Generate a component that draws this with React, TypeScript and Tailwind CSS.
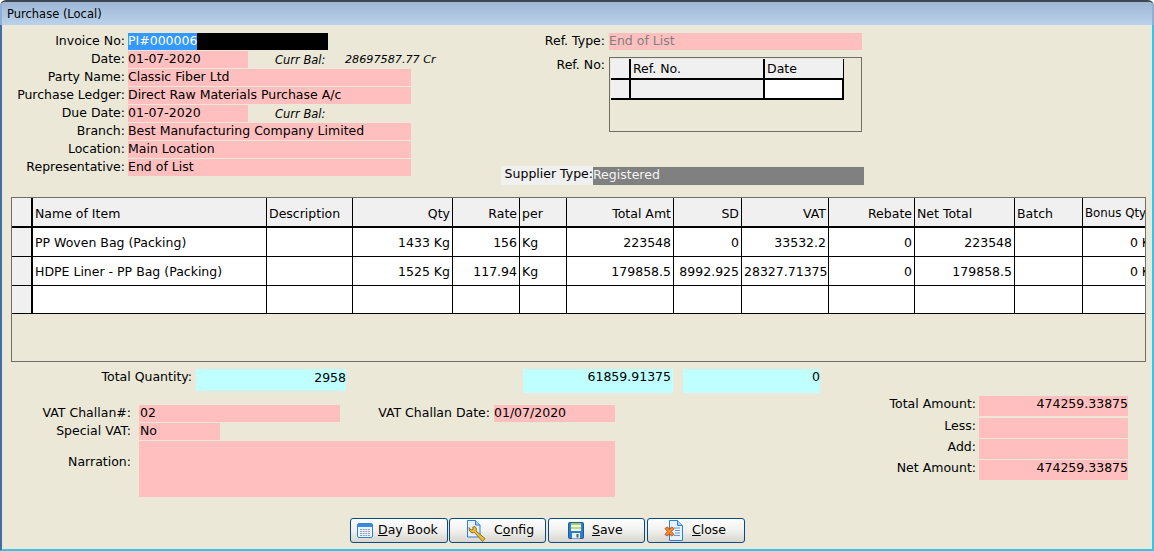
import type { ReactNode } from "react";

const font = "font-['Tahoma','DejaVu_Sans',sans-serif]";

type Col = { w: string; label: string; right?: boolean };

const cols: Col[] = [
  { w: "w-[234px]", label: "Name of Item" },
  { w: "w-[86px]", label: "Description" },
  { w: "w-[100px]", label: "Qty", right: true },
  { w: "w-[67px]", label: "Rate", right: true },
  { w: "w-[47px]", label: "per" },
  { w: "w-[107px]", label: "Total Amt", right: true },
  { w: "w-[68px]", label: "SD", right: true },
  { w: "w-[87px]", label: "VAT", right: true },
  { w: "w-[86px]", label: "Rebate", right: true },
  { w: "w-[100px]", label: "Net Total" },
  { w: "w-[68px]", label: "Batch" },
  { w: "w-[78px]", label: "Bonus Qty" },
];

const rows = [
  ["PP Woven Bag (Packing)", "", "1433 Kg", "156", "Kg", "223548", "0", "33532.2", "0", "223548", "", "0 Kg"],
  ["HDPE Liner - PP Bag (Packing)", "", "1525 Kg", "117.94", "Kg", "179858.5", "8992.925", "28327.71375", "0", "179858.5", "", "0 Kg"],
  ["", "", "", "", "", "", "", "", "", "", "", ""],
];

function Label({ children, className = "" }: { children: ReactNode; className?: string }) {
  return <div className={`text-right whitespace-nowrap ${className}`}>{children}</div>;
}

function Row({ label, value, w = "w-[283px]", extra, bg = "bg-[#ffbfbf]" }: { label: string; value?: ReactNode; w?: string; extra?: ReactNode; bg?: string }) {
  return (
    <div className="flex h-[17px] items-start mb-px">
      <Label className="w-[125px] mr-[3px] leading-[15px]">{label}</Label>
      <div className={`${w} h-[17px] leading-[15px] ${bg} whitespace-nowrap`}>{value}</div>
      {extra}
    </div>
  );
}

function DayBookIcon() {
  return (
    <svg width="16" height="15" viewBox="0 0 16 15">
      <rect x=".5" y=".5" width="15" height="14" rx="1.5" fill="#eef4fb" stroke="#2f7fd0" />
      <path d="M1 1.5a1 1 0 0 1 1-1h12a1 1 0 0 1 1 1V4H1z" fill="#3a8ae0" />
      <path d="M3 6.500h10M3 8.500h10M3 10.500h10M3 12.500h10" stroke="#8c9fb5" />
      <path d="M5.500 6v7M8 6v7M10.500 6v7" stroke="#eef4fb" strokeWidth=".7" />
    </svg>
  );
}

function ConfigIcon() {
  return (
    <svg width="20" height="22" viewBox="0 0 20 22">
      <path d="M.5.5h8l4.500 4.500v12H.5z" fill="#e6f1fb" stroke="#2f7fd0" />
      <path d="M8.500.5V5H13" fill="#a9cff2" stroke="#2f7fd0" />
      <path d="M2 7.500 4 10l2-.5L5.800 7 8 6.500 9.500 9 9 11l9 7.500-2.500 3L7.500 12.500 5 13 2.500 11z" fill="#e9bd3e" stroke="#8c6a14" strokeWidth=".9" />
    </svg>
  );
}

function SaveIcon() {
  return (
    <svg width="16" height="17" viewBox="0 0 16 17">
      <rect x=".5" y=".5" width="15" height="16" rx="1" fill="#2f7ccc" stroke="#1f5a9c" />
      <rect x="3" y="1" width="10" height="8" fill="#f4f7e0" />
      <rect x="3" y="1" width="10" height="2" fill="#9fd25f" />
      <rect x="3" y="5" width="10" height="2" fill="#b8de84" />
      <rect x="4" y="11" width="8" height="5.500" fill="#e9eef2" />
      <rect x="8.500" y="12" width="2" height="3.500" fill="#51606e" />
    </svg>
  );
}

function CloseIcon() {
  return (
    <svg width="20" height="21" viewBox="0 0 20 21">
      <path d="M5.500.5h8l5 5v15h-13z" fill="#e6f1fb" stroke="#2f7fd0" />
      <path d="M13.500.5v5h5" fill="#a9cff2" stroke="#2f7fd0" />
      <path d="M10 8h6M11 10.500h5M11 13h5M10 15.500h6" stroke="#5f9ad6" />
      <path d="M1 8.500 3.500 7 5.500 9.500 7.500 7 10 8.500 7.500 11.500 10 14.500 7.500 16 5.500 13.500 3.500 16 1 14.500 3.500 11.500z" fill="#f0902c" stroke="#c9431c" strokeWidth=".9" />
    </svg>
  );
}

function ToolButton({ icon, pre, u, post, w, gap }: { icon: ReactNode; pre?: string; u: string; post: string; w: string; gap: string }) {
  return (
    <button className={`${w} h-[25px] flex items-center ${gap} rounded-[3px] border border-[#0a4a82] bg-gradient-to-b from-[#fdfdfd] via-[#f1f1ef] to-[#d6d5ce] text-[12.5px] text-black`}>
      {icon}
      <span>
        {pre}
        <span className="underline">{u}</span>
        {post}
      </span>
    </button>
  );
}

function RefGrid() {
  return (
    <div className="w-[253px] h-[75px] border border-[#6f6f68] p-px">
      <div className="flex w-[233px] h-[21px] bg-[#f0f0f0] border-b-2 border-black">
        <div className="w-[20px] border-r-2 border-black" />
        <div className="w-[134px] pl-[2px] border-r-2 border-black leading-[20px]">Ref. No.</div>
        <div className="w-[79px] pl-[2px] border-r border-black leading-[20px]">Date</div>
      </div>
      <div className="flex w-[233px] h-[20px] bg-[#f0f0f0] border-b-2 border-black">
        <div className="w-[20px] border-r-2 border-black" />
        <div className="w-[134px] border-r-2 border-black" />
        <div className="w-[79px] bg-white border-r-2 border-black" />
      </div>
    </div>
  );
}

function ItemGrid() {
  return (
    <div className="ml-[9px] mt-[12px] w-[1135px] h-[165px] border border-[#6f6f68] overflow-hidden">
      <div className="flex h-[30px] border-b-2 border-black bg-[#f0f0f0]">
        <div className="w-[21px] shrink-0 border-r-2 border-black" />
        {cols.map((c) => (
          <div key={c.label} className={`${c.w} shrink-0 px-[2px] leading-[31px] border-r border-black whitespace-nowrap ${c.right ? "text-right" : ""} ${c.label === "Bonus Qty" ? "text-[11.8px]" : ""}`}>
            {c.label}
          </div>
        ))}
      </div>
      {rows.map((r, i) => (
        <div key={i} className={`flex border-b border-black ${i === 2 ? "h-[28px]" : "h-[29px]"}`}>
          <div className="w-[21px] shrink-0 bg-[#f0f0f0] border-r-2 border-black" />
          {cols.map((c, j) => (
            <div key={c.label} className={`${c.w} shrink-0 px-[2px] leading-[29px] bg-white border-r border-black whitespace-nowrap overflow-hidden ${c.right || j === 9 || j === 11 ? "text-right" : ""}`}>
              {r[j]}
            </div>
          ))}
        </div>
      ))}
    </div>
  );
}

export default function App() {
  return (
    <div className={`w-[1154px] h-[551px] flex flex-col overflow-hidden rounded-t-[6px] border-t-2 border-t-[#3d4650] bg-[#ebe8d8] text-[12.5px] text-black ${font}`}>
      <div className="h-[23px] pl-[5px] leading-[24px] text-[11.5px] bg-gradient-to-b from-[#9db6d4] to-[#bad2ea] border-x-2 border-x-[#8fb0d4]">
        Purchase (Local)
      </div>

      <div className="flex-1 flex flex-col border-l-2 border-l-[#3f6ea3] border-r-2 border-r-[#38c4e8] border-b-2 border-b-[#38c4e8]">
        <div className="flex pt-[8px] h-[160px]">
          <div className="w-[507px] -ml-[2px] shrink-0">
            <Row
              label="Invoice No:"
              w="w-[200px]"
              bg="bg-black"
              value={<span className="bg-[#3399ff] text-white inline-block h-[17px]">PI#000006</span>}
            />
            <Row
              label="Date:"
              value="01-07-2020"
              w="w-[120px]"
              extra={
                <div className="flex italic text-[11.5px] mt-px">
                  <span className="ml-[27px] w-[70px]">Curr Bal:</span>
                  <span className="text-[11.2px]">28697587.77 Cr</span>
                </div>
              }
            />
            <Row label="Party Name:" value="Classic Fiber Ltd" />
            <Row label="Purchase Ledger:" value="Direct Raw Materials Purchase A/c" />
            <Row
              label="Due Date:"
              value="01-07-2020"
              w="w-[120px]"
              extra={<span className="ml-[27px] mt-px italic text-[11.5px]">Curr Bal:</span>}
            />
            <Row label="Branch:" value="Best Manufacturing Company Limited" />
            <Row label="Location:" value="Main Location" />
            <Row label="Representative:" value="End of List" />
          </div>

          <div className="flex flex-col">
            <div className="flex h-[17px] mb-[7px]">
              <Label className="w-[98px] mr-[4px] leading-[15px]">Ref. Type:</Label>
              <div className="w-[253px] bg-[#ffbfbf] text-[#808080] leading-[15px]">End of List</div>
            </div>
            <div className="flex">
              <Label className="w-[98px] mr-[4px] leading-[15px]">Ref. No:</Label>
              <RefGrid />
            </div>
            <div className="flex h-[19px] mt-[34px] -ml-[6px]">
              <div className="w-[92px] bg-[#f0f0f0] text-right leading-[15px]">Supplier Type:</div>
              <div className="w-[271px] h-[18px] mt-px bg-[#808080] text-[#f4f4f4] leading-[16px]">Registered</div>
            </div>
          </div>
        </div>

        <ItemGrid />

        <div className="flex mt-[7px] h-[25px]">
          <Label className="w-[190px] leading-[15px]">Total Quantity:</Label>
          <div className="ml-[4px] w-[150px] h-[22px] bg-[#bfffff] text-right leading-[18px]">2958</div>
          <div className="ml-[177px] w-[150px] h-[24px] bg-[#bfffff] text-right pr-[2px] leading-[15px]">61859.91375</div>
          <div className="ml-[10px] w-[137px] h-[24px] bg-[#bfffff] text-right leading-[15px]">0</div>
        </div>

        <div className="flex">
          <div className="flex flex-col mt-[11px] w-[876px]">
            <div className="flex h-[17px] mb-px">
              <Label className="w-[129px] mr-[8px] leading-[15px]">VAT Challan#:</Label>
              <div className="w-[201px] bg-[#ffbfbf] leading-[15px] pl-px">02</div>
              <Label className="w-[150px] mr-[4px] leading-[15px]">VAT Challan Date:</Label>
              <div className="w-[121px] bg-[#ffbfbf] leading-[15px]">01/07/2020</div>
            </div>
            <div className="flex h-[17px] mb-px">
              <Label className="w-[129px] mr-[8px] leading-[15px]">Special VAT:</Label>
              <div className="w-[81px] bg-[#ffbfbf] leading-[15px] pl-px">No</div>
            </div>
            <div className="flex h-[56px]">
              <Label className="w-[129px] mr-[8px] mt-[13px] leading-[15px]">Narration:</Label>
              <div className="w-[476px] bg-[#ffbfbf]" />
            </div>
          </div>

          <div className="flex flex-col mt-[2px]">
            {[
              ["Total Amount:", "474259.33875"],
              ["Less:", ""],
              ["Add:", ""],
              ["Net Amount:", "474259.33875"],
            ].map(([l, v], i) => (
              <div key={l} className={`flex h-[20px] ${i === 0 ? "mb-[2px]" : "mb-px"}`}>
                <Label className="w-[98px] mr-[3px] leading-[15px]">{l}</Label>
                <div className="w-[149px] bg-[#ffbfbf] text-right leading-[15px]">{v}</div>
              </div>
            ))}
          </div>
        </div>

        <div className="flex gap-px mt-[21px] ml-[348px]">
          <ToolButton icon={<DayBookIcon />} u="D" post="ay Book" w="w-[98px] pl-[6px]" gap="gap-[5px]" />
          <ToolButton icon={<ConfigIcon />} pre="C" u="o" post="nfig" w="w-[97px] pl-[17px]" gap="gap-[7px]" />
          <ToolButton icon={<SaveIcon />} u="S" post="ave" w="w-[97px] ml-px pl-[19px]" gap="gap-[8px]" />
          <ToolButton icon={<CloseIcon />} u="C" post="lose" w="w-[98px] ml-px pl-[16px]" gap="gap-[8px]" />
        </div>
      </div>
    </div>
  );
}
